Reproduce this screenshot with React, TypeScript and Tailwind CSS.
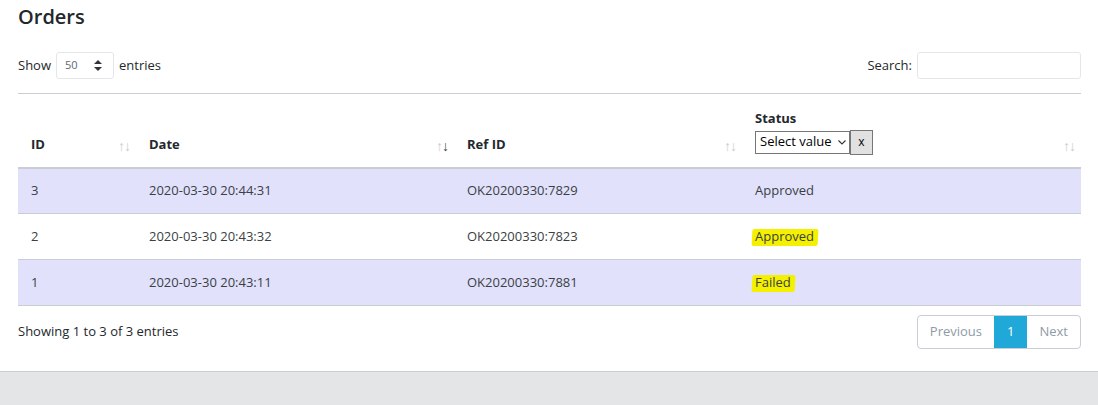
import { useState } from 'react'

const rows = [
    { id: '3', date: '2020-03-30 20:44:31', ref: 'OK20200330:7829', status: 'Approved', mark: false },
    { id: '2', date: '2020-03-30 20:43:32', ref: 'OK20200330:7823', status: 'Approved', mark: true },
    { id: '1', date: '2020-03-30 20:43:11', ref: 'OK20200330:7881', status: 'Failed', mark: true },
]

function SortIcon({ active }: { active?: boolean }) {
    return (
        <span className="absolute right-[6px] bottom-[14px] text-[14px] leading-none tracking-[-1px] select-none">
            <span className="text-[#cdcdcd]">↑</span>
            <span className={active ? 'text-[#444]' : 'text-[#cdcdcd]'}>↓</span>
        </span>
    )
}

export default function App() {
    const [len, setLen] = useState('50')
    const [search, setSearch] = useState('')
    const [status, setStatus] = useState('')

    return (
        <div className="min-h-[405px] bg-[#e4e5e6] text-[#23282c]" style={{ fontFamily: '"Open Sans", "Noto Sans", sans-serif' }}>
            <div className="bg-white pl-[18px] pr-[17px] pb-[22px] border-b border-[#c8ced3]">
                <h2 className="text-[20px] font-semibold leading-none pt-[7px] pb-[25px] text-[#23282c]">Orders</h2>

                <div className="flex items-center justify-between text-[13px]">
                    <label className="flex items-center gap-[5px]">
                        Show
                        <span className="relative">
                            <select
                                value={len}
                                onChange={e => setLen(e.target.value)}
                                className="appearance-none h-[27px] w-[58px] border border-[#e4e7ea] rounded-[3px] pl-[8px] text-[11px] text-[#5c6873] bg-white"
                            >
                                <option>10</option>
                                <option>25</option>
                                <option>50</option>
                                <option>100</option>
                            </select>
                            <svg className="absolute right-[12px] top-[8px] pointer-events-none" width="8" height="11" viewBox="0 0 8 11">
                                <path d="M4 0 L8 4 L0 4 Z M0 7 L8 7 L4 11 Z" fill="#2f353a" />
                            </svg>
                        </span>
                        entries
                    </label>
                    <label className="flex items-center gap-[5px]">
                        Search:
                        <input
                            value={search}
                            onChange={e => setSearch(e.target.value)}
                            className="h-[27px] w-[164px] border border-[#e4e7ea] rounded-[3px] px-2 outline-none"
                        />
                    </label>
                </div>

                <table className="w-full mt-[14px] border-t border-[#c8ced3] border-collapse text-[13px]">
                    <colgroup>
                        <col className="w-[118px]" />
                        <col className="w-[318px]" />
                        <col className="w-[288px]" />
                        <col />
                    </colgroup>
                    <thead>
                        <tr className="h-[74px] border-b-[2px] border-[#c8ced3]">
                            <th className="relative text-left align-bottom font-bold px-[13px] pb-[12px]">ID<SortIcon /></th>
                            <th className="relative text-left align-bottom font-bold px-[13px] pb-[12px]">Date<SortIcon active /></th>
                            <th className="relative text-left align-bottom font-bold px-[13px] pb-[12px]">Ref ID<SortIcon /></th>
                            <th className="relative text-left align-bottom font-bold px-[13px] pb-[12px]">
                                <div className="leading-none mb-[5px]">Status</div>
                                <div className="flex items-start font-normal">
                                    <span className="relative mt-[1px]">
                                        <select
                                            value={status}
                                            onChange={e => setStatus(e.target.value)}
                                            className="appearance-none h-[23px] w-[95px] border border-[#767676] bg-white text-[13px] text-black pl-[4px] pr-[14px]"
                                        >
                                            <option value="">Select value</option>
                                            <option>Approved</option>
                                            <option>Failed</option>
                                        </select>
                                        <svg className="absolute right-[4px] top-[9px] pointer-events-none" width="8" height="5" viewBox="0 0 8 5">
                                            <path d="M0.5 0.5 L4 4 L7.5 0.5" fill="none" stroke="#333" strokeWidth="1.1" />
                                        </svg>
                                    </span>
                                    <button
                                        onClick={() => setStatus('')}
                                        className="h-[25px] w-[23px] border border-[#767676] bg-[#e1e1e1] text-[12px] text-black leading-none"
                                    >
                                        x
                                    </button>
                                </div>
                                <SortIcon />
                            </th>
                        </tr>
                    </thead>
                    <tbody>
                        {rows.map((r, i) => (
                            <tr key={r.id} className={`h-[46px] border-b border-[#c8ced3] ${i % 2 === 0 ? 'bg-[#e1e1fc]' : 'bg-white'}`}>
                                <td className="px-[13px] text-[#3a3f44]">{r.id}</td>
                                <td className="px-[13px] text-[#3a3f44]">{r.date}</td>
                                <td className="px-[13px] text-[#3a3f44]">{r.ref}</td>
                                <td className="px-[13px] text-[#3a3f44]">
                                    {r.mark ? (
                                        <span className="relative inline-block">
                                            <span className="absolute left-[-3px] right-[-4px] top-[2px] bottom-[1px] bg-[#f4f000] rounded-[2px] -skew-x-3" />
                                            <span className="relative">{r.status}</span>
                                        </span>
                                    ) : (
                                        r.status
                                    )}
                                </td>
                            </tr>
                        ))}
                    </tbody>
                </table>

                <div className="flex items-center justify-between mt-[9px] text-[13px]">
                    <div>Showing 1 to 3 of 3 entries</div>
                    <div className="flex h-[34px] border border-[#c8ced3] rounded-[4px] overflow-hidden">
                        <button className="px-[12px] text-[#8f9ba6]">Previous</button>
                        <button className="px-[13px] bg-[#20a8d8] text-white">1</button>
                        <button className="px-[12px] text-[#8f9ba6]">Next</button>
                    </div>
                </div>
            </div>
        </div>
    )
}
